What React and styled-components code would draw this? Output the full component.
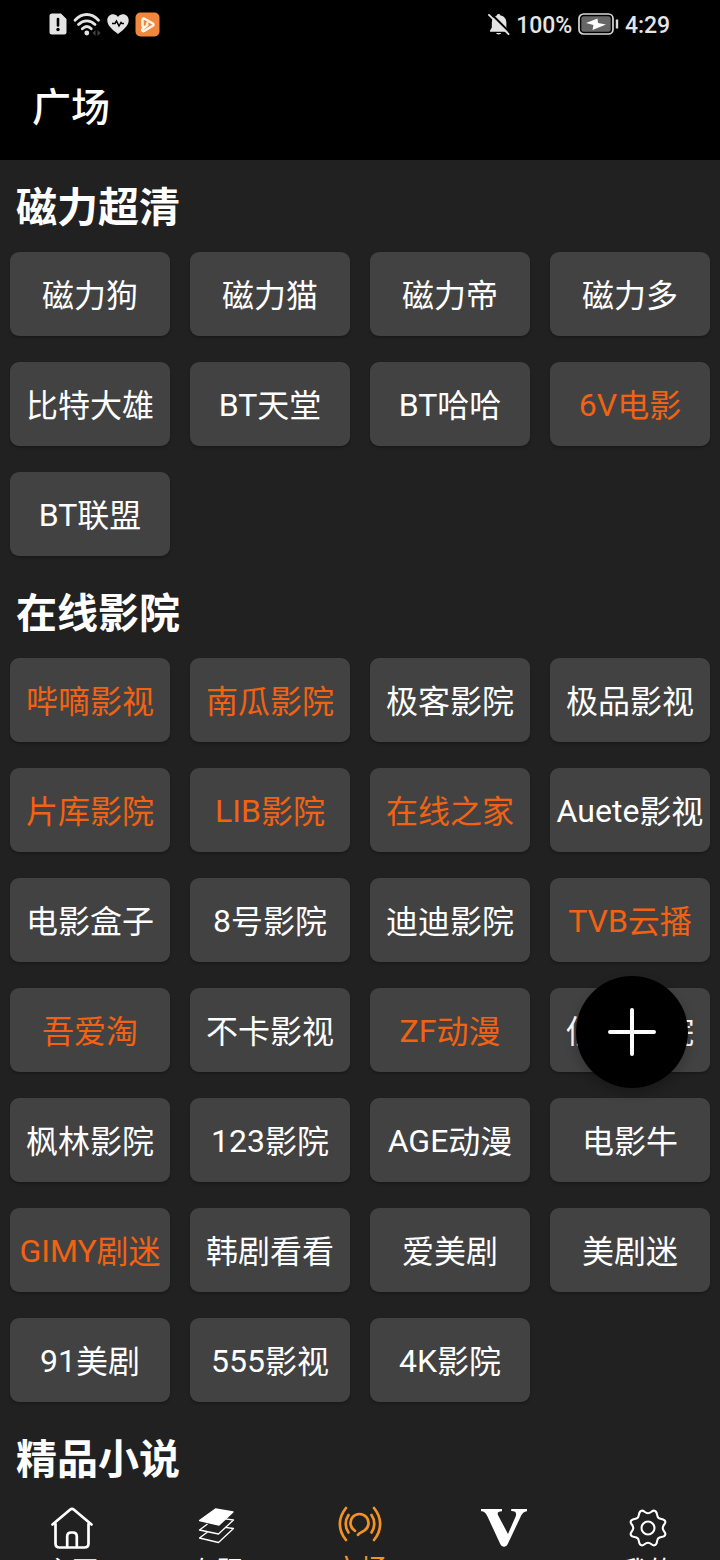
import React from "react";
import styled, { createGlobalStyle } from "styled-components";

const Global = createGlobalStyle`
  *, *::before, *::after { box-sizing: border-box; }
  html, body { margin: 0; padding: 0; background: #212121; }
  body { font-family: Roboto, "Noto Sans CJK SC", sans-serif; color: #fff; overflow: hidden; }
  svg { display: block; flex: none; }
`;

const Screen = styled.div`
  position: relative;
  width: 720px;
  height: 1560px;
  display: flex;
  flex-direction: column;
  overflow: hidden;
  background: #212121;
`;

const StatusBar = styled.div`
  height: 48px;
  flex: none;
  display: flex;
  justify-content: space-between;
  align-items: center;
  padding: 0 50px 0 49px;
  background: #000;
  color: #e4e4e4;
`;

const StatusGroup = styled.div`
  display: flex;
  align-items: center;
  gap: ${(p) => p.$gap}px;
`;

const StatusText = styled.span`
  font-size: 23px;
  line-height: 44px;
  font-weight: 500;
  letter-spacing: -0.1px;
  padding-top: 4px;
`;

const TitleBar = styled.header`
  height: 112px;
  flex: none;
  display: flex;
  align-items: center;
  padding: 8px 0 0 32px;
  background: #000;
`;

const Title = styled.h1`
  margin: 0;
  font-size: 39px;
  line-height: 56px;
  font-weight: 500;
`;

const Content = styled.main`
  height: 1328px;
  flex: none;
  overflow: hidden;
`;

const SectionTitle = styled.h2`
  margin: 0;
  height: 92px;
  padding: 2px 0 0 16px;
  font-size: 41px;
  line-height: 92px;
  font-weight: 700;
`;

const Grid = styled.div`
  display: grid;
  grid-template-columns: repeat(4, 160px);
  gap: 26px 20px;
  padding: 0 10px 10px;
`;

const Tile = styled.button`
  height: 84px;
  padding: 4px 0 0;
  border: 0;
  border-radius: 9px;
  background: #424242;
  box-shadow: 0 2px 3px rgba(0, 0, 0, 0.22);
  color: ${(p) => (p.$hot ? "#f26212" : "#fff")};
  font-family: inherit;
  font-size: 32px;
  line-height: 44px;
  white-space: nowrap;
`;

const Latin = styled.span`
  line-height: 1;
  vertical-align: 1px;
`;

const AddButton = styled.button`
  position: absolute;
  left: 576px;
  top: 976px;
  width: 112px;
  height: 112px;
  padding: 0;
  border: 0;
  border-radius: 50%;
  background: #000;
  display: flex;
  align-items: center;
  justify-content: center;
  box-shadow: 0 6px 12px rgba(0, 0, 0, 0.22);
`;

const NavBar = styled.nav`
  height: 72px;
  flex: none;
  display: grid;
  grid-template-columns: repeat(5, 144px);
  background: #212121;
  overflow: hidden;
`;

const NavItem = styled.div`
  display: flex;
  flex-direction: column;
  align-items: center;
  color: ${(p) => (p.$active ? "#f39325" : "#fff")};
`;

const NavIcon = styled.div`
  height: 64px;
  flex: none;
  padding-top: ${(p) => p.$top}px;
`;

const NavLabel = styled.span`
  font-size: ${(p) => (p.$active ? 29 : 26)}px;
  line-height: 30px;
  margin-top: ${(p) => (p.$active ? 4 : 4)}px;
  flex: none;
`;

const sections = [
  {
    title: "磁力超清",
    items: ["磁力狗", "磁力猫", "磁力帝", "磁力多", "比特大雄", "BT天堂", "BT哈哈", "*6V电影", "BT联盟"],
  },
  {
    title: "在线影院",
    items: [
      "*哔嘀影视", "*南瓜影院", "极客影院", "极品影视",
      "*片库影院", "*LIB影院", "*在线之家", "Auete影视",
      "电影盒子", "8号影院", "迪迪影院", "*TVB云播",
      "*吾爱淘", "不卡影视", "*ZF动漫", "低端影院",
      "枫林影院", "123影院", "AGE动漫", "电影牛",
      "*GIMY剧迷", "韩剧看看", "爱美剧", "美剧迷",
      "91美剧", "555影视", "4K影院",
    ],
  },
  { title: "精品小说", items: [] },
];

const SimIcon = () => (
  <svg width="18" height="22" viewBox="0 0 18 22">
    <path d="M3 .5h9L17.500 6v13a2.500 2.500 0 0 1-2.500 2.500H3A2.500 2.500 0 0 1 .5 19V3A2.500 2.500 0 0 1 3 .5Z" fill="#e4e4e4" />
    <path d="M9 6v6.500" stroke="#000" strokeWidth="2.600" strokeLinecap="round" />
    <circle cx="9" cy="16.500" r="1.700" />
  </svg>
);

const WifiIcon = () => (
  <svg width="28" height="24" viewBox="0 0 28 24">
    <g fill="none" stroke="#e4e4e4" strokeWidth="2.800" strokeLinecap="round">
      <path d="M2 8.200C9 .6 18.500 .6 25.500 8.200" />
      <path d="M5.500 12.600c5-5 11.500-5 16.500 0" />
      <path d="M9.300 16.700c2.800-2.700 6.200-2.700 9 0" />
    </g>
    <circle cx="13.800" cy="21" r="2.400" fill="#e4e4e4" />
    <path d="M22.500 18v6l-3-3ZM24.500 18v6l3-3Z" fill="#444" />
  </svg>
);

const HeartIcon = () => (
  <svg width="22" height="20" viewBox="0 0 22 20">
    <path d="M11 20C5 15.500 .3 11.500 .3 6.300 .3 2.700 3 .3 6 .3c2 0 3.900 1 5 2.800C12.100 1.300 14 .3 16 .3c3 0 5.700 2.400 5.700 6 0 5.200-4.700 9.200-10.700 13.700Z" fill="#e4e4e4" />
    <path d="M5 9.500h3l1.500-2.500 2.500 5 2-3.500 1 1h2" fill="none" stroke="#000" strokeWidth="1.500" />
  </svg>
);

const PlayBadge = () => (
  <svg width="25" height="25" viewBox="0 0 25 25">
    <rect x=".5" y=".5" width="24" height="24" rx="5" fill="#f0873c" />
    <path d="M7.500 14V7.800c0-1.200 1-1.700 2-1.100l8.300 4.800c1 .7 1 1.700 0 2.300l-8.500 5c-2 1-3-1-1.400-2.300l4.300-3.200v-2" fill="none" stroke="#fff3e7" strokeWidth="2.500" strokeLinecap="round" strokeLinejoin="round" />
  </svg>
);

const BellOffIcon = () => (
  <svg width="22" height="23" viewBox="0 0 23 24">
    <path d="M9.200 2.500a2 2 0 0 1 3.800 0c4 .7 6.200 3.500 6.200 7.300v5.400l2 3.300v1H2v-1L4 15.200V9.800c0-3.800 1.800-6.500 5.200-7.300ZM8.500 21h5.200c-.6 2-4.600 2-5.200 0Z" fill="#e4e4e4" />
    <path d="M2.500 0 23 20.500" stroke="#000" strokeWidth="2.200" />
    <path d="M1 2 21.500 22" stroke="#e4e4e4" strokeWidth="2" strokeLinecap="round" />
  </svg>
);

const BatteryIcon = () => (
  <svg width="41" height="22" viewBox="0 0 41 22">
    <rect x="1" y="1" width="34" height="20" rx="4.500" fill="#000" stroke="#d8d8d8" strokeWidth="1.700" />
    <rect x="3.300" y="3.300" width="29.400" height="15.400" rx="2.500" fill="#666" />
    <path d="m19.500 5.500-11.500 4.500 7.500 2-1 5L28 11.500l-8-1.500Z" fill="#fff" />
    <path d="M39 6.500v9" stroke="#d8d8d8" strokeWidth="2.400" />
  </svg>
);

const HomeIcon = () => (
  <svg width="44" height="44" viewBox="0 0 44 44" fill="none" stroke="currentColor" strokeWidth="2.700" strokeLinecap="round" strokeLinejoin="round">
    <path d="M2.500 18.500 20 3.700q2-1.600 4 0l17.500 14.800" />
    <path d="M5.500 18v19.500q0 4 4 4h25q4 0 4-4V18" />
    <path d="M17.200 41V30.500q0-4 4-4h1.600q4 0 4 4V41" />
  </svg>
);

const LayersIcon = () => (
  <svg width="38" height="40" viewBox="0 0 38 40" fill="none" stroke="currentColor" strokeWidth="1.300" strokeLinejoin="round">
    <path d="m18.500 3 17.500 3-14 13L2.500 14.500Z" fill="currentColor" />
    <path d="M10.500 18 2.500 24 21.500 28 36.500 14l-8.500-1.200" />
    <path d="M10.500 26 2.500 32 21.500 36.500 36.500 22.500l-8.500-1.200" />
  </svg>
);

const BroadcastIcon = () => (
  <svg width="44" height="38" viewBox="0 0 44 38" fill="none" stroke="currentColor" strokeWidth="2.700" strokeLinecap="round">
    <path d="M17 25.800a9 9 0 1 1 9 0c-2.200 1.700-4.500 1.500-6 4" />
    <path d="M10.500 10c-3.700 5.300-3.700 12.200 0 17.500M33.500 10c3.700 5.300 3.700 12.200 0 17.500" />
    <path d="M8 3C-.2 13-.2 25 8 35M36 3c8.200 10 8.200 22 0 32" />
  </svg>
);

const SerifMarkIcon = () => (
  <svg width="46" height="40" viewBox="0 0 46 40">
    <path d="M0 1h21v2.200c-4.300.2-5 1.400-3.800 4.300L27 26l7.500-17.200c1.500-3.800.3-5.500-4.300-5.700V1H46v2.200c-3.800.5-5 2.700-6.600 6L27 35.500c-2 4.300-6 4.300-8 0L6.500 8.500C4.600 4.500 3.200 3.300 0 3.200Z" fill="currentColor" />
  </svg>
);

const GearIcon = () => (
  <svg width="40" height="40" viewBox="0 0 40 40" fill="none" stroke="currentColor" strokeWidth="2.100" strokeLinejoin="round">
    <path d="M13.500 2.700C16 2 16.800 5.300 20 5.300S24 2 26.500 2.700C30 3.700 28.200 7.500 30.300 9.700 32.500 11.800 36.300 10 37.300 13.500 38 16 34.700 16.800 34.700 20S38 24 37.300 26.500C36.300 30 32.500 28.200 30.300 30.300 28.200 32.500 30 36.300 26.500 37.300 24 38 23.200 34.700 20 34.700S16 38 13.500 37.300C10 36.300 11.800 32.500 9.700 30.300 7.500 28.200 3.700 30 2.700 26.500 2 24 5.300 23.200 5.300 20S2 16 2.700 13.500C3.700 10 7.500 11.800 9.700 9.700 11.800 7.500 10 3.700 13.500 2.700Z" />
    <circle cx="20" cy="20" r="6.500" />
  </svg>
);

const navItems = [
  { label: "主页", icon: <HomeIcon />, top: 18 },
  { label: "专题", icon: <LayersIcon />, top: 18 },
  { label: "广场", icon: <BroadcastIcon />, top: 17, active: true },
  { icon: <SerifMarkIcon />, top: 20 },
  { label: "我的", icon: <GearIcon />, top: 20 },
];

const splitRuns = (text) => {
  const latin = text.match(/^[A-Za-z0-9]*/)[0];
  return [latin, text.slice(latin.length)];
};

const SiteTile = ({ name }) => {
  const [latin, rest] = splitRuns(name.replace("*", ""));
  return (
    <Tile $hot={name.startsWith("*")}>
      {latin && <Latin>{latin}</Latin>}
      {rest}
    </Tile>
  );
};

export default function App() {
  return (
    <Screen>
      <Global />
      <StatusBar>
        <StatusGroup $gap={6}>
          <SimIcon />
          <WifiIcon />
          <HeartIcon />
          <PlayBadge />
        </StatusGroup>
        <StatusGroup $gap={6}>
          <BellOffIcon />
          <StatusText>100%</StatusText>
          <BatteryIcon />
          <StatusText>4:29</StatusText>
        </StatusGroup>
      </StatusBar>
      <TitleBar>
        <Title>广场</Title>
      </TitleBar>
      <Content>
        {sections.map((section) => (
          <section key={section.title}>
            <SectionTitle>{section.title}</SectionTitle>
            <Grid>
              {section.items.map((name) => (
                <SiteTile key={name} name={name} />
              ))}
            </Grid>
          </section>
        ))}
      </Content>
      <NavBar>
        {navItems.map((item, index) => (
          <NavItem key={index} $active={item.active}>
            <NavIcon $top={item.top}>{item.icon}</NavIcon>
            {item.label && <NavLabel $active={item.active}>{item.label}</NavLabel>}
          </NavItem>
        ))}
      </NavBar>
      <AddButton aria-label="添加">
        <svg width="48" height="48" viewBox="0 0 48 48" stroke="#fff" strokeWidth="4" strokeLinecap="round">
          <path d="M24 2v44M2 24h44" />
        </svg>
      </AddButton>
    </Screen>
  );
}
